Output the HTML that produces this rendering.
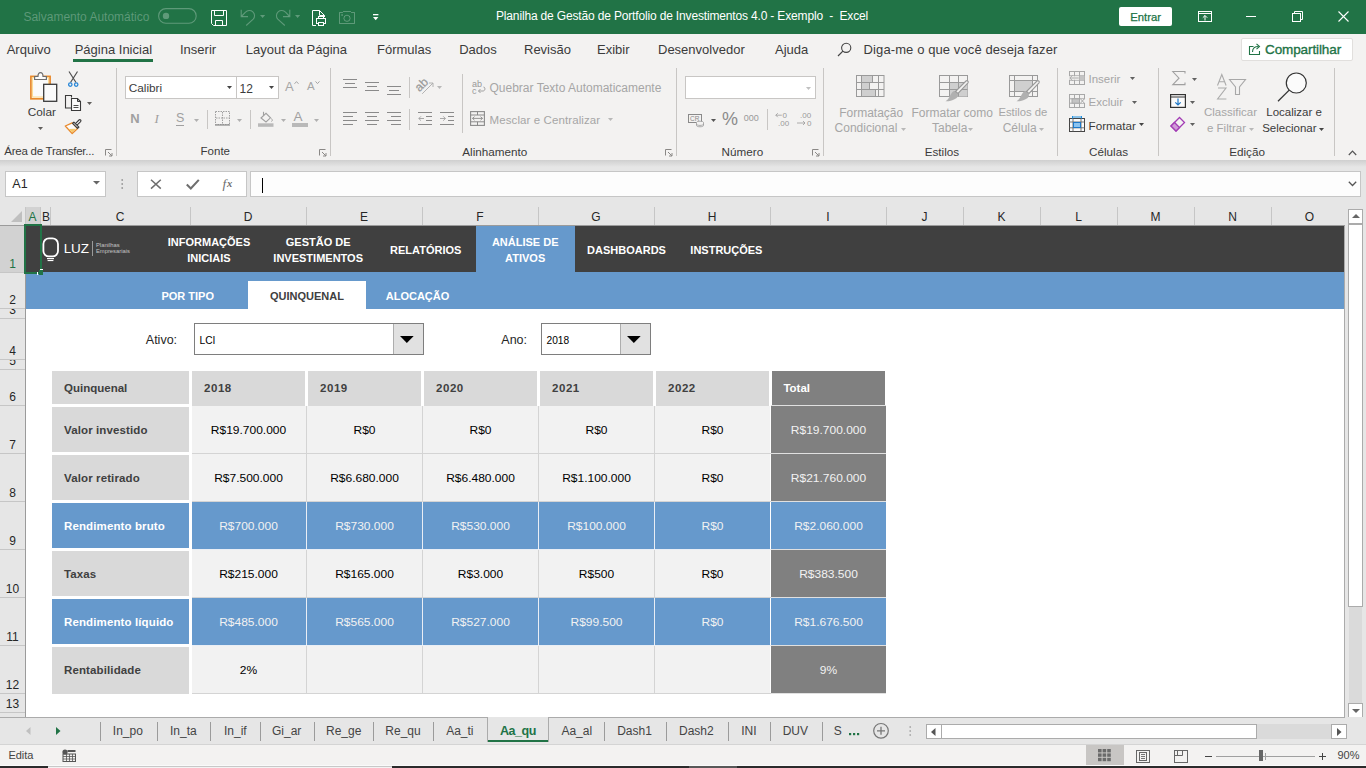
<!DOCTYPE html>
<html><head><meta charset="utf-8">
<style>
*{margin:0;padding:0;box-sizing:border-box}
html,body{width:1366px;height:768px;overflow:hidden;background:#f3f2f1;font-family:"Liberation Sans",sans-serif;color:#262626;position:relative}
.a{position:absolute}
.t{position:absolute;white-space:pre;line-height:1}
svg{overflow:visible}
</style></head><body>

<div class="a" style="left:0px;top:0px;width:1366px;height:34px;background:#217346;"></div>
<div class="t" style="left:23.4px;top:10.64px;font-size:12px;color:rgba(255,255,255,0.28);font-weight:normal;">Salvamento Automático</div>
<svg class="a" style="left:158px;top:8px;" width="39" height="16" viewBox="0 0 39 16"><rect x="0.6" y="0.6" width="37.6" height="14.6" rx="7.3" fill="none" stroke="rgba(255,255,255,0.28)" stroke-width="1.1"/><circle cx="8" cy="7.9" r="3.2" fill="rgba(255,255,255,0.28)"/></svg>
<svg class="a" style="left:211px;top:10px;" width="16" height="16" viewBox="0 0 16 16"><path d="M0.5 0.5 H15.5 V15.5 H2.5 L0.5 13.5 Z" fill="none" stroke="#fff" stroke-width="1"/><path d="M3.5 0.5 V5.5 H12.5 V0.5" fill="none" stroke="#fff"/><path d="M4.5 15.5 V10.5 H11.5 V15.5" fill="none" stroke="#fff"/></svg>
<svg class="a" style="left:236px;top:6px;" width="24" height="22" viewBox="0 0 24 22"><path d="M5.2 3.8 V10.6 H12" fill="none" stroke="rgba(255,255,255,0.28)" stroke-width="1.1"/><path d="M5.8 10 L9.5 6.2 A5.2 5.2 0 0 1 17.2 13.2 L10.2 19.5" fill="none" stroke="rgba(255,255,255,0.28)" stroke-width="1.1"/></svg>
<svg class="a" style="left:260px;top:15px;" width="5" height="3" viewBox="0 0 5 3"><path d="M0 0 H5.2 L2.6 3 Z" fill="rgba(255,255,255,0.28)"/></svg>
<svg class="a" style="left:271px;top:6px;" width="24" height="22" viewBox="0 0 24 22"><g transform="translate(24,0) scale(-1,1)"><path d="M5.2 3.8 V10.6 H12" fill="none" stroke="rgba(255,255,255,0.28)" stroke-width="1.1"/><path d="M5.8 10 L9.5 6.2 A5.2 5.2 0 0 1 17.2 13.2 L10.2 19.5" fill="none" stroke="rgba(255,255,255,0.28)" stroke-width="1.1"/></g></svg>
<svg class="a" style="left:295px;top:15px;" width="5" height="3" viewBox="0 0 5 3"><path d="M0 0 H5.2 L2.6 3 Z" fill="rgba(255,255,255,0.28)"/></svg>
<svg class="a" style="left:312px;top:10px;" width="15" height="16" viewBox="0 0 15 16"><path d="M0.5 0.5 H7.5 L12.5 5.5 V7" fill="none" stroke="#fff"/><path d="M0.5 0.5 V15.5 H4" fill="none" stroke="#fff"/><path d="M7.5 0.5 V5.5 H12.5" fill="none" stroke="#fff"/><rect x="4.5" y="8.5" width="9" height="5" fill="none" stroke="#fff"/><rect x="6.5" y="6.5" width="5" height="2" fill="none" stroke="#fff"/><rect x="6.5" y="12.5" width="5" height="3" fill="#217346" stroke="#fff"/></svg>
<svg class="a" style="left:339px;top:11px;" width="16" height="14" viewBox="0 0 16 14"><path d="M0.5 12.5 V1.5 H3.5 L4.5 0.5 H11.5 L12.5 1.5 H15.5 V12.5 Z" fill="none" stroke="rgba(255,255,255,0.28)"/><circle cx="8" cy="7.3" r="3.1" fill="none" stroke="rgba(255,255,255,0.28)"/><rect x="2.3" y="3.2" width="1.6" height="1.6" fill="rgba(255,255,255,0.28)"/></svg>
<svg class="a" style="left:372.8px;top:13.8px;" width="6" height="7" viewBox="0 0 6 7"><rect x="0" y="0" width="5.4" height="1.3" fill="#fff"/><path d="M0 3 H5.4 L2.7 6.2 Z" fill="#fff"/></svg>
<div class="t" style="left:496px;top:10.04px;font-size:12px;color:#fff;font-weight:normal;letter-spacing:-0.16px">Planilha de Gestão de Portfolio de Investimentos 4.0 - Exemplo  -  Excel</div>
<div class="a" style="left:1119px;top:7px;width:53px;height:19px;background:#fff;border-radius:2px"></div>
<div class="t" style="left:945.7px;width:400px;text-align:center;top:12.030000000000001px;font-size:11.3px;color:#217346;font-weight:normal;-webkit-text-stroke:0.25px #217346">Entrar</div>
<svg class="a" style="left:1198px;top:11px;" width="14" height="11" viewBox="0 0 14 11"><rect x="0.5" y="0.5" width="13" height="10" fill="none" stroke="#fff"/><path d="M0.5 2.5 H13.5" stroke="#fff"/><path d="M7 9.5 V4.5 M4.8 6.7 L7 4.5 L9.2 6.7" fill="none" stroke="#fff"/></svg>
<div class="a" style="left:1246px;top:16px;width:10px;height:1px;background:#fff;"></div>
<svg class="a" style="left:1292px;top:11px;" width="11" height="11" viewBox="0 0 11 11"><rect x="0.5" y="2.5" width="8" height="8" fill="none" stroke="#fff"/><path d="M2.5 2.5 V0.5 H10.5 V8.5 H8.5" fill="none" stroke="#fff"/></svg>
<svg class="a" style="left:1338px;top:11px;" width="11" height="11" viewBox="0 0 11 11"><path d="M0.5 0.5 L10.5 10.5 M10.5 0.5 L0.5 10.5" stroke="#fff" stroke-width="1.1"/></svg>
<div class="a" style="left:0px;top:34px;width:1366px;height:126px;background:#f3f2f1;"></div>
<div class="t" style="left:6.7px;top:43.0px;font-size:13px;color:#3b3b3b;font-weight:normal;">Arquivo</div>
<div class="t" style="left:74.7px;top:43.0px;font-size:13px;color:#3b3b3b;font-weight:normal;">Página Inicial</div>
<div class="t" style="left:180px;top:43.0px;font-size:13px;color:#3b3b3b;font-weight:normal;">Inserir</div>
<div class="t" style="left:245.8px;top:43.0px;font-size:13px;color:#3b3b3b;font-weight:normal;">Layout da Página</div>
<div class="t" style="left:377px;top:43.0px;font-size:13px;color:#3b3b3b;font-weight:normal;">Fórmulas</div>
<div class="t" style="left:459.2px;top:43.0px;font-size:13px;color:#3b3b3b;font-weight:normal;">Dados</div>
<div class="t" style="left:524px;top:43.0px;font-size:13px;color:#3b3b3b;font-weight:normal;">Revisão</div>
<div class="t" style="left:597px;top:43.0px;font-size:13px;color:#3b3b3b;font-weight:normal;">Exibir</div>
<div class="t" style="left:658px;top:43.0px;font-size:13px;color:#3b3b3b;font-weight:normal;">Desenvolvedor</div>
<div class="t" style="left:775px;top:43.0px;font-size:13px;color:#3b3b3b;font-weight:normal;">Ajuda</div>
<div class="a" style="left:73px;top:59px;width:79.5px;height:3px;background:#217346;"></div>
<svg class="a" style="left:837px;top:42px;" width="15" height="15" viewBox="0 0 15 15"><circle cx="9.2" cy="5.8" r="4.6" fill="none" stroke="#444" stroke-width="1.1"/><path d="M5.9 9.1 L1 14" stroke="#444" stroke-width="1.2"/></svg>
<div class="t" style="left:863.6px;top:43.0px;font-size:13px;color:#3b3b3b;font-weight:normal;letter-spacing:0.1px">Diga-me o que você deseja fazer</div>
<div class="a" style="left:1241px;top:37.5px;width:112px;height:23px;background:#fff;border:1px solid #e1dfdd;border-radius:2px"></div>
<svg class="a" style="left:1248px;top:42px;" width="14" height="14" viewBox="0 0 14 14"><path d="M5.5 4.5 H1.5 V12.5 H11.5 V9" fill="none" stroke="#217346" stroke-width="1.1"/><path d="M4.5 10 C4.5 6 7 4.5 10.5 4.5" fill="none" stroke="#217346" stroke-width="1.1"/><path d="M8.5 1.8 L11.5 4.5 L8.5 7.2" fill="none" stroke="#217346" stroke-width="1.1"/></svg>
<div class="t" style="left:1265px;top:43.07px;font-size:13.5px;color:#217346;font-weight:normal;letter-spacing:-0.1px;-webkit-text-stroke:0.35px #217346">Compartilhar</div>
<svg class="a" style="left:30px;top:72px;" width="28" height="30" viewBox="0 0 28 30"><rect x="0.9" y="4.4" width="19.2" height="22.4" fill="#fbfbfb" stroke="#e8892c" stroke-width="1.7"/><rect x="2.6" y="5.6" width="15.8" height="19.4" fill="none" stroke="#fcd98a" stroke-width="1"/><rect x="3.5" y="6.5" width="14" height="17.5" fill="#fbfbfb"/><path d="M4.6 7.5 V4.5 H8 C8 1.5 9.2 0.6 10.5 0.6 C11.8 0.6 13 1.5 13 4.5 H16.4 V7.5 Z" fill="#fbfbfb" stroke="#6f6f6f" stroke-width="1.2"/><rect x="13.7" y="12.3" width="13" height="17" fill="#fbfbfb" stroke="#3a3a3a" stroke-width="1.3"/></svg>
<div class="t" style="left:27.7px;top:107.01px;font-size:11.8px;color:#3b3b3b;font-weight:normal;">Colar</div>
<svg class="a" style="left:38px;top:127px;" width="5" height="3" viewBox="0 0 5 3"><path d="M0 0 H5 L2.5 3 Z" fill="#605e5c"/></svg>
<svg class="a" style="left:67.5px;top:71px;" width="11" height="16" viewBox="0 0 11 16"><path d="M1 0.5 L8 11.5 M9.5 0.5 L2.5 11.5" stroke="#505050" stroke-width="1.2"/><circle cx="2.3" cy="13.6" r="1.7" fill="none" stroke="#2b88d8" stroke-width="1.3"/><circle cx="8.2" cy="13.6" r="1.7" fill="none" stroke="#2b88d8" stroke-width="1.3"/></svg>
<svg class="a" style="left:65px;top:95.2px;" width="17" height="17" viewBox="0 0 17 17"><path d="M6.5 2.5 V0.5 H0.5 V13 H6" fill="none" stroke="#3a3a3a" stroke-width="1.1"/><path d="M6.5 3.5 H12.5 L15.5 6.5 V15.5 H6.5 Z" fill="#fbfbfb" stroke="#3a3a3a" stroke-width="1.1"/><path d="M12.5 3.5 V6.5 H15.5" fill="none" stroke="#3a3a3a" stroke-width="1"/><path d="M8.5 10.5 H13.5 M8.5 12.5 H13.5" stroke="#3a3a3a" stroke-width="0.9"/></svg>
<svg class="a" style="left:87px;top:102px;" width="5" height="3" viewBox="0 0 5 3"><path d="M0 0 H5 L2.5 3 Z" fill="#605e5c"/></svg>
<svg class="a" style="left:62px;top:115px;" width="22" height="22" viewBox="0 0 22 22"><path d="M3.3 11 L10.2 7.8 L15.6 13.6 L10.2 18.6 Z" fill="#fbfbfb" stroke="#e8892c" stroke-width="1.3" stroke-linejoin="round"/><path d="M6.5 14 L14 13.8 L10.2 17.6 Z" fill="#f7c766"/><path d="M14.2 9.4 L17.8 5.8" stroke="#3a3a3a" stroke-width="3.4" stroke-linecap="round"/><path d="M14.2 9.4 L17.8 5.8" stroke="#fbfbfb" stroke-width="1.2" stroke-linecap="round"/><path d="M10.6 8.4 L11.9 7.1 L16.9 12.1 L15.6 13.4 Z" fill="#fbfbfb" stroke="#3a3a3a" stroke-width="1.2" stroke-linejoin="round"/></svg>
<div class="t" style="left:4.3px;top:146.07000000000002px;font-size:11.5px;color:#3b3b3b;font-weight:normal;letter-spacing:-0.25px">Área de Transfer...</div>
<svg class="a" style="left:105px;top:149px;" width="8" height="8" viewBox="0 0 8 8"><path d="M0.5 0.5 H6.5 M0.5 0.5 V6.5" fill="none" stroke="#8a8886" stroke-width="1"/><path d="M3 3 L7 7 M7 4 V7 H4" fill="none" stroke="#8a8886" stroke-width="1"/></svg>
<div class="a" style="left:116px;top:68px;width:1px;height:88px;background:#c8c6c4;"></div>
<div class="a" style="left:125px;top:76px;width:112px;height:23px;background:#fff;border:1px solid #c8c6c4"></div>
<div class="a" style="left:236px;top:76px;width:43px;height:23px;background:#fff;border:1px solid #c8c6c4"></div>
<div class="t" style="left:128.7px;top:83.01px;font-size:11.8px;color:#3b3b3b;font-weight:normal;">Calibri</div>
<div class="t" style="left:239.5px;top:82.84px;font-size:12px;color:#3b3b3b;font-weight:normal;">12</div>
<svg class="a" style="left:226.5px;top:86.2px;" width="5" height="3" viewBox="0 0 5 3"><path d="M0 0 H5 L2.5 3 Z" fill="#444"/></svg>
<svg class="a" style="left:268.7px;top:86.2px;" width="5" height="3" viewBox="0 0 5 3"><path d="M0 0 H5 L2.5 3 Z" fill="#444"/></svg>
<div class="t" style="left:285px;top:80.2px;font-size:13px;color:#a6a6a6;font-weight:normal;">A</div>
<svg class="a" style="left:293.5px;top:80.5px;" width="5" height="3" viewBox="0 0 5 3"><path d="M0.5 2.8 L2.5 0.6 L4.5 2.8" fill="none" stroke="#a6a6a6" stroke-width="1"/></svg>
<div class="t" style="left:307px;top:81.47px;font-size:11.5px;color:#a6a6a6;font-weight:normal;">A</div>
<svg class="a" style="left:315px;top:80.5px;" width="5" height="3" viewBox="0 0 5 3"><path d="M0.5 0.4 L2.5 2.6 L4.5 0.4" fill="none" stroke="#a6a6a6" stroke-width="1"/></svg>
<div class="t" style="left:130.3px;top:112.2px;font-size:13px;color:#a0a0a0;font-weight:bold;">N</div>
<div class="t" style="left:154.5px;top:112.2px;font-size:13px;color:#a0a0a0;font-weight:normal;font-family:'Liberation Serif';font-style:italic">I</div>
<div class="t" style="left:176px;top:112.42px;font-size:12.5px;color:#a0a0a0;font-weight:normal;">S</div>
<div class="a" style="left:176px;top:124.5px;width:8px;height:1px;background:#a0a0a0;"></div>
<svg class="a" style="left:194.2px;top:118.5px;" width="5" height="3" viewBox="0 0 5 3"><path d="M0 0 H5 L2.5 3 Z" fill="#b0b0b0"/></svg>
<div class="a" style="left:207px;top:110px;width:1px;height:19px;background:#c8c6c4;"></div>
<svg class="a" style="left:215px;top:111px;" width="15" height="15" viewBox="0 0 15 15"><rect x="0.5" y="0.5" width="14" height="13" fill="none" stroke="#a0a0a0" stroke-width="1" stroke-dasharray="1.5 1"/><path d="M7.5 1 V13.5 M1 7 H14.5" stroke="#a0a0a0" stroke-width="1" stroke-dasharray="1.5 1"/><path d="M0 14 H15" stroke="#8a8a8a" stroke-width="1.2"/></svg>
<svg class="a" style="left:237.2px;top:118.5px;" width="5" height="3" viewBox="0 0 5 3"><path d="M0 0 H5 L2.5 3 Z" fill="#b0b0b0"/></svg>
<div class="a" style="left:250px;top:110px;width:1px;height:19px;background:#c8c6c4;"></div>
<svg class="a" style="left:258px;top:111px;" width="16" height="16" viewBox="0 0 16 16"><path d="M3 7 L8 2.3 L12.5 6.8 L8 11 Z" fill="none" stroke="#a0a0a0" stroke-width="1.1"/><path d="M5.5 4.5 V0.8" stroke="#a0a0a0" stroke-width="1.1"/><path d="M13.5 7.5 C14.5 9 14.5 10 13.5 10.5" stroke="#a0a0a0" fill="none"/><rect x="0" y="12.3" width="15.5" height="3.5" fill="#b9b9b9"/></svg>
<svg class="a" style="left:280.6px;top:118.5px;" width="5" height="3" viewBox="0 0 5 3"><path d="M0 0 H5 L2.5 3 Z" fill="#b0b0b0"/></svg>
<div class="t" style="left:293.5px;top:110.07px;font-size:13.5px;color:#a0a0a0;font-weight:normal;">A</div>
<div class="a" style="left:292.2px;top:123.4px;width:15.6px;height:3.4px;background:#b9b9b9;"></div>
<svg class="a" style="left:314.2px;top:118.5px;" width="5" height="3" viewBox="0 0 5 3"><path d="M0 0 H5 L2.5 3 Z" fill="#b0b0b0"/></svg>
<div class="t" style="left:200.6px;top:146.07000000000002px;font-size:11.5px;color:#3b3b3b;font-weight:normal;">Fonte</div>
<svg class="a" style="left:318.5px;top:149px;" width="8" height="8" viewBox="0 0 8 8"><path d="M0.5 0.5 H6.5 M0.5 0.5 V6.5" fill="none" stroke="#8a8886" stroke-width="1"/><path d="M3 3 L7 7 M7 4 V7 H4" fill="none" stroke="#8a8886" stroke-width="1"/></svg>
<div class="a" style="left:330px;top:68px;width:1px;height:88px;background:#c8c6c4;"></div>
<svg class="a" style="left:343px;top:79px;" width="20" height="20" viewBox="0 0 20 20"><rect x="0" y="0" width="14" height="1" fill="#8a8a8a"/><rect x="2" y="4" width="10" height="1" fill="#8a8a8a"/><rect x="0" y="8" width="14" height="1" fill="#8a8a8a"/></svg>
<svg class="a" style="left:365px;top:82px;" width="20" height="20" viewBox="0 0 20 20"><rect x="0" y="0" width="14" height="1" fill="#8a8a8a"/><rect x="2" y="4" width="10" height="1" fill="#8a8a8a"/><rect x="0" y="8" width="14" height="1" fill="#8a8a8a"/></svg>
<svg class="a" style="left:387px;top:86px;" width="20" height="20" viewBox="0 0 20 20"><rect x="0" y="0" width="14" height="1" fill="#8a8a8a"/><rect x="2" y="4" width="10" height="1" fill="#8a8a8a"/><rect x="0" y="8" width="14" height="1" fill="#8a8a8a"/></svg>
<div class="a" style="left:409px;top:77px;width:1px;height:21px;background:#c8c6c4;"></div>
<svg class="a" style="left:417px;top:79px;" width="16" height="16" viewBox="0 0 16 16"><text x="0" y="0" transform="translate(2.6,13.2) rotate(-45)" font-family="Liberation Sans" font-size="12" fill="#9a9a9a" stroke="#9a9a9a" stroke-width="0.25">ab</text><path d="M5.2 14.8 L16 4 M12 4 H16 V8" fill="none" stroke="#ababab" stroke-width="0.9"/></svg>
<svg class="a" style="left:437px;top:86px;" width="5" height="3" viewBox="0 0 5 3"><path d="M0 0 H5 L2.5 3 Z" fill="#b8b8b8"/></svg>
<div class="a" style="left:462px;top:74px;width:1px;height:59px;background:#c8c6c4;"></div>
<svg class="a" style="left:472.3px;top:80px;" width="15" height="15" viewBox="0 0 15 15"><text x="0" y="7" font-family="Liberation Sans" font-size="9" fill="#999">ab</text><text x="0" y="13.6" font-family="Liberation Sans" font-size="9" fill="#999">c</text><path d="M6.5 11 H11 C13.5 11 13.5 7 11.5 7" fill="none" stroke="#999" stroke-width="0.9"/><path d="M8.5 9 L6.5 11 L8.5 13" fill="none" stroke="#999" stroke-width="0.9"/></svg>
<div class="t" style="left:489.5px;top:82.44px;font-size:12px;color:#a6a6a6;font-weight:normal;">Quebrar Texto Automaticamente</div>
<svg class="a" style="left:343px;top:112px;" width="20" height="20" viewBox="0 0 20 20"><rect x="0" y="0" width="14" height="1" fill="#8a8a8a"/><rect x="0" y="4" width="10" height="1" fill="#8a8a8a"/><rect x="0" y="8" width="14" height="1" fill="#8a8a8a"/><rect x="0" y="12" width="10" height="1" fill="#8a8a8a"/></svg>
<svg class="a" style="left:365px;top:112px;" width="20" height="20" viewBox="0 0 20 20"><rect x="0" y="0" width="14" height="1" fill="#8a8a8a"/><rect x="2" y="4" width="10" height="1" fill="#8a8a8a"/><rect x="0" y="8" width="14" height="1" fill="#8a8a8a"/><rect x="2" y="12" width="10" height="1" fill="#8a8a8a"/></svg>
<svg class="a" style="left:387px;top:112px;" width="20" height="20" viewBox="0 0 20 20"><rect x="0" y="0" width="14" height="1" fill="#8a8a8a"/><rect x="4" y="4" width="10" height="1" fill="#8a8a8a"/><rect x="0" y="8" width="14" height="1" fill="#8a8a8a"/><rect x="4" y="12" width="10" height="1" fill="#8a8a8a"/></svg>
<div class="a" style="left:409px;top:109px;width:1px;height:21px;background:#c8c6c4;"></div>
<svg class="a" style="left:418px;top:112px;" width="15" height="14" viewBox="0 0 15 14"><rect x="0" y="0" width="14" height="1" fill="#8a8a8a"/><rect x="8" y="4" width="6" height="1" fill="#8a8a8a"/><rect x="8" y="8" width="6" height="1" fill="#8a8a8a"/><rect x="0" y="12" width="14" height="1" fill="#8a8a8a"/><path d="M6 6.5 H0.8 M3 4.3 L0.8 6.5 L3 8.7" fill="none" stroke="#a0a0a0" stroke-width="0.9"/></svg>
<svg class="a" style="left:440px;top:112px;" width="15" height="14" viewBox="0 0 15 14"><rect x="0" y="0" width="14" height="1" fill="#8a8a8a"/><rect x="8" y="4" width="6" height="1" fill="#8a8a8a"/><rect x="8" y="8" width="6" height="1" fill="#8a8a8a"/><rect x="0" y="12" width="14" height="1" fill="#8a8a8a"/><path d="M0 6.5 H5.4 M3.2 4.3 L5.4 6.5 L3.2 8.7" fill="none" stroke="#a0a0a0" stroke-width="0.9"/></svg>
<svg class="a" style="left:470px;top:111px;" width="15" height="15" viewBox="0 0 15 15"><rect x="0.6" y="0.6" width="13.8" height="13.8" fill="none" stroke="#8a8a8a" stroke-width="1.1"/><path d="M0.6 4 H14.4 M0.6 10.8 H14.4 M7.5 0.6 V4 M7.5 10.8 V14.4" stroke="#8a8a8a" stroke-width="1"/><path d="M2.5 7.4 H12.5 M4.5 5.6 L2.5 7.4 L4.5 9.2 M10.5 5.6 L12.5 7.4 L10.5 9.2" fill="none" stroke="#8a8a8a" stroke-width="0.9"/></svg>
<div class="t" style="left:489.5px;top:115.27px;font-size:11.5px;color:#a6a6a6;font-weight:normal;letter-spacing:0.1px">Mesclar e Centralizar</div>
<svg class="a" style="left:608px;top:118.2px;" width="5" height="3" viewBox="0 0 5 3"><path d="M0 0 H5 L2.5 3 Z" fill="#b8b8b8"/></svg>
<div class="t" style="left:462.3px;top:145.9px;font-size:11.7px;color:#3b3b3b;font-weight:normal;">Alinhamento</div>
<svg class="a" style="left:664.5px;top:149px;" width="8" height="8" viewBox="0 0 8 8"><path d="M0.5 0.5 H6.5 M0.5 0.5 V6.5" fill="none" stroke="#8a8886" stroke-width="1"/><path d="M3 3 L7 7 M7 4 V7 H4" fill="none" stroke="#8a8886" stroke-width="1"/></svg>
<div class="a" style="left:676px;top:68px;width:1px;height:88px;background:#c8c6c4;"></div>
<div class="a" style="left:685px;top:76px;width:131px;height:23px;background:#fff;border:1px solid #c8c6c4"></div>
<svg class="a" style="left:805.5px;top:86.5px;" width="5" height="3" viewBox="0 0 5 3"><path d="M0 0 H5 L2.5 3 Z" fill="#c0c0c0"/></svg>
<svg class="a" style="left:688px;top:114px;" width="17" height="14" viewBox="0 0 17 14"><rect x="0.5" y="0.5" width="13" height="8" fill="none" stroke="#8a8a8a"/><text x="2" y="7" font-family="Liberation Sans" font-size="6.5" fill="#8a8a8a">CR</text><ellipse cx="12" cy="8.5" rx="3.5" ry="1.3" fill="#f3f2f1" stroke="#999" stroke-width="0.8"/><path d="M8.5 8.5 V11.5 C8.5 13.2 15.5 13.2 15.5 11.5 V8.5" fill="#f3f2f1" stroke="#999" stroke-width="0.8"/><path d="M8.5 10.2 C8.5 11.8 15.5 11.8 15.5 10.2" fill="none" stroke="#999" stroke-width="0.8"/></svg>
<svg class="a" style="left:710.5px;top:118.5px;" width="5" height="3" viewBox="0 0 5 3"><path d="M0 0 H5 L2.5 3 Z" fill="#555"/></svg>
<div class="t" style="left:722px;top:110.26px;font-size:18px;color:#8a8a8a;font-weight:normal;">%</div>
<div class="t" style="left:743.8px;top:114.38px;font-size:9px;color:#9a9a9a;font-weight:normal;">000</div>
<div class="a" style="left:767px;top:109px;width:1px;height:21px;background:#c8c6c4;"></div>
<svg class="a" style="left:775px;top:111px;" width="16" height="16" viewBox="0 0 16 16"><text x="7.5" y="7" font-family="Liberation Sans" font-size="8" fill="#9a9a9a">0</text><text x="3" y="15" font-family="Liberation Sans" font-size="8" fill="#9a9a9a">.00</text><path d="M6.8 4.2 H0.8 M2.8 2.2 L0.8 4.2 L2.8 6.2" fill="none" stroke="#9a9a9a" stroke-width="0.8"/></svg>
<svg class="a" style="left:797px;top:111px;" width="16" height="16" viewBox="0 0 16 16"><text x="3" y="7" font-family="Liberation Sans" font-size="8" fill="#9a9a9a">.00</text><text x="10" y="15" font-family="Liberation Sans" font-size="8" fill="#9a9a9a">0</text><path d="M0 12 H8 M6 10 L8 12 L6 14" fill="none" stroke="#9a9a9a" stroke-width="0.8"/></svg>
<div class="t" style="left:721.6px;top:145.9px;font-size:11.7px;color:#3b3b3b;font-weight:normal;">Número</div>
<svg class="a" style="left:811.5px;top:149px;" width="8" height="8" viewBox="0 0 8 8"><path d="M0.5 0.5 H6.5 M0.5 0.5 V6.5" fill="none" stroke="#8a8886" stroke-width="1"/><path d="M3 3 L7 7 M7 4 V7 H4" fill="none" stroke="#8a8886" stroke-width="1"/></svg>
<div class="a" style="left:823px;top:68px;width:1px;height:88px;background:#c8c6c4;"></div>
<svg class="a" style="left:856px;top:75px;" width="29" height="23" viewBox="0 0 29 23"><rect x="0.5" y="0.5" width="27.5" height="21" fill="#f3f2f1" stroke="#9a9a9a"/><rect x="5.5" y="1" width="11" height="6.5" fill="#cfcfcf"/><rect x="5.5" y="7.5" width="8" height="7" fill="#cfcfcf"/><rect x="5.5" y="14.5" width="14" height="6.5" fill="#cfcfcf"/><path d="M0.5 7.5 H28 M0.5 14.5 H28 M5.5 0.5 V21.5 M22.5 0.5 V21.5" stroke="#9a9a9a" stroke-width="1"/><path d="M16.5 0.5 V7.5 M13.5 7.5 V14.5 M19.5 14.5 V21.5" stroke="#9a9a9a"/></svg>
<svg class="a" style="left:938.5px;top:75px;" width="30" height="23" viewBox="0 0 30 23"><rect x="0.5" y="0.5" width="28" height="21" fill="#f3f2f1" stroke="#9a9a9a"/><rect x="10.5" y="7.5" width="18" height="14" fill="#cfcfcf"/><path d="M0.5 7.5 H28.5 M0.5 14.5 H28.5 M10.5 0.5 V21.5 M19.5 0.5 V21.5" stroke="#9a9a9a"/></svg>
<svg class="a" style="left:944px;top:80px;" width="26" height="22" viewBox="0 0 26 22"><path d="M11 11 C15 13 15 17 11 19 C8 21 4 21.5 1.5 21.3 C4 20 5.5 17 7 14 C8 12 9.5 10.5 11 11 Z" fill="#b0b0b0"/><path d="M11.5 11.5 L22 1 C23 0 25 1.5 24 2.8 L14 13.5 Z" fill="#f3f2f1" stroke="#9a9a9a" stroke-width="1.1"/></svg>
<svg class="a" style="left:1009px;top:75px;" width="30" height="23" viewBox="0 0 30 23"><rect x="0.5" y="0.5" width="28" height="21" fill="#f3f2f1" stroke="#9a9a9a"/><rect x="5.5" y="5.5" width="18" height="11" fill="#cfcfcf" stroke="#9a9a9a"/><path d="M0.5 5.5 H28.5 M0.5 16.5 H28.5 M5.5 0.5 V21.5 M23.5 0.5 V21.5" stroke="#9a9a9a"/></svg>
<svg class="a" style="left:1014.5px;top:80px;" width="26" height="22" viewBox="0 0 26 22"><path d="M11 11 C15 13 15 17 11 19 C8 21 4 21.5 1.5 21.3 C4 20 5.5 17 7 14 C8 12 9.5 10.5 11 11 Z" fill="#b0b0b0"/><path d="M11.5 11.5 L22 1 C23 0 25 1.5 24 2.8 L14 13.5 Z" fill="#f3f2f1" stroke="#9a9a9a" stroke-width="1.1"/></svg>
<div class="t" style="left:839.2px;top:106.74000000000001px;font-size:12px;color:#a6a6a6;font-weight:normal;">Formatação</div>
<div class="t" style="left:834.6px;top:122.34px;font-size:12px;color:#a6a6a6;font-weight:normal;">Condicional</div>
<svg class="a" style="left:900.8px;top:127.5px;" width="5" height="3" viewBox="0 0 5 3"><path d="M0 0 H5 L2.5 3 Z" fill="#b8b8b8"/></svg>
<div class="t" style="left:911.5px;top:106.74000000000001px;font-size:12px;color:#a6a6a6;font-weight:normal;">Formatar como</div>
<div class="t" style="left:932px;top:122.34px;font-size:12px;color:#a6a6a6;font-weight:normal;">Tabela</div>
<svg class="a" style="left:968px;top:127.5px;" width="5" height="3" viewBox="0 0 5 3"><path d="M0 0 H5 L2.5 3 Z" fill="#b8b8b8"/></svg>
<div class="t" style="left:998.4px;top:107.33000000000001px;font-size:11.3px;color:#a6a6a6;font-weight:normal;">Estilos de</div>
<div class="t" style="left:1002.7px;top:122.34px;font-size:12px;color:#a6a6a6;font-weight:normal;">Célula</div>
<svg class="a" style="left:1038.5px;top:127.5px;" width="5" height="3" viewBox="0 0 5 3"><path d="M0 0 H5 L2.5 3 Z" fill="#b8b8b8"/></svg>
<div class="t" style="left:924.7px;top:145.9px;font-size:11.7px;color:#3b3b3b;font-weight:normal;">Estilos</div>
<div class="a" style="left:1057px;top:68px;width:1px;height:88px;background:#c8c6c4;"></div>
<svg class="a" style="left:1069px;top:71px;" width="17" height="15" viewBox="0 0 17 15"><rect x="0.5" y="0.5" width="15" height="13" fill="none" stroke="#a8a8a8"/><path d="M0.5 4.8 H15.5 M0.5 9.2 H15.5 M5.5 0.5 V13.5 M10.5 0.5 V13.5" stroke="#a8a8a8"/><rect x="10.5" y="4.8" width="5" height="4.4" fill="#c4c4c4"/><rect x="0" y="5.3" width="9.8" height="3.4" fill="#f3f2f1"/><path d="M9.8 7 H0.8 M3.6 4.2 L0.8 7 L3.6 9.8" fill="none" stroke="#a8a8a8" stroke-width="1"/></svg>
<div class="t" style="left:1088.5px;top:74.27px;font-size:11.5px;color:#a6a6a6;font-weight:normal;">Inserir</div>
<svg class="a" style="left:1130px;top:77px;" width="5" height="3" viewBox="0 0 5 3"><path d="M0 0 H5 L2.5 3 Z" fill="#606060"/></svg>
<svg class="a" style="left:1069px;top:94px;" width="17" height="15" viewBox="0 0 17 15"><rect x="0.5" y="0.5" width="15" height="13" fill="none" stroke="#a8a8a8"/><path d="M0.5 4.8 H15.5 M0.5 9.2 H15.5 M5.5 0.5 V13.5 M10.5 0.5 V13.5" stroke="#a8a8a8"/><rect x="3" y="4.8" width="7.5" height="4.4" fill="#c4c4c4" stroke="#a8a8a8"/><rect x="11" y="5.3" width="5" height="3.6" fill="#f3f2f1"/><path d="M11.3 4.6 L15.5 9.4 M15.5 4.6 L11.3 9.4" stroke="#a8a8a8" stroke-width="1"/></svg>
<div class="t" style="left:1088.5px;top:97.27px;font-size:11.5px;color:#a6a6a6;font-weight:normal;">Excluir</div>
<svg class="a" style="left:1132px;top:100.5px;" width="5" height="3" viewBox="0 0 5 3"><path d="M0 0 H5 L2.5 3 Z" fill="#606060"/></svg>
<svg class="a" style="left:1069px;top:117px;" width="17" height="16" viewBox="0 0 17 16"><rect x="0.5" y="1.5" width="15" height="13" fill="#fbfbfb" stroke="#444" stroke-width="1"/><path d="M0.5 5 H15.5 M0.5 10.8 H15.5 M4 1.5 V14.5 M12 1.5 V14.5" stroke="#666" stroke-width="0.9"/><rect x="4.5" y="5.5" width="7" height="5" fill="#8cc4f0" stroke="#1e78c8" stroke-width="1"/><path d="M3.5 0 H12.5 M3.5 -1 V1.5 M12.5 -1 V1.5" stroke="#1e90e0" stroke-width="1"/></svg>
<div class="t" style="left:1088.5px;top:119.6px;font-size:11.7px;color:#3b3b3b;font-weight:normal;">Formatar</div>
<svg class="a" style="left:1139px;top:123px;" width="5" height="3" viewBox="0 0 5 3"><path d="M0 0 H5 L2.5 3 Z" fill="#444"/></svg>
<div class="t" style="left:1089px;top:145.9px;font-size:11.7px;color:#3b3b3b;font-weight:normal;">Células</div>
<div class="a" style="left:1158px;top:68px;width:1px;height:88px;background:#c8c6c4;"></div>
<svg class="a" style="left:1171.5px;top:71px;" width="14" height="15" viewBox="0 0 14 15"><path d="M13 2.5 V0.5 H0.8 L7 7.2 L0.8 13.6 H13 V11.5" fill="none" stroke="#a0a0a0" stroke-width="1.1"/></svg>
<svg class="a" style="left:1191.8px;top:77.5px;" width="5" height="3" viewBox="0 0 5 3"><path d="M0 0 H5 L2.5 3 Z" fill="#606060"/></svg>
<svg class="a" style="left:1170px;top:94px;" width="16" height="14" viewBox="0 0 16 14"><rect x="0.6" y="0.6" width="14.8" height="12.8" fill="#fbfbfb" stroke="#333" stroke-width="1.2"/><path d="M0.6 3 H15.4" stroke="#333" stroke-width="1"/><path d="M8 4.5 V11 M5.3 8.3 L8 11 L10.7 8.3" fill="none" stroke="#1e78c8" stroke-width="1.2"/></svg>
<svg class="a" style="left:1190px;top:100.5px;" width="5" height="3" viewBox="0 0 5 3"><path d="M0 0 H5 L2.5 3 Z" fill="#606060"/></svg>
<svg class="a" style="left:1170px;top:116px;" width="16" height="16" viewBox="0 0 16 16"><path d="M1 10 L9.5 1.5 L14.5 6.5 L6 15 Z" fill="#f3f2f1" stroke="#a23cb4" stroke-width="1.3"/><path d="M1 10 L4.5 6.5 L9.5 11.5 L6 15 Z" fill="#d09ad8" stroke="#a23cb4" stroke-width="1.3"/></svg>
<svg class="a" style="left:1190px;top:123px;" width="5" height="3" viewBox="0 0 5 3"><path d="M0 0 H5 L2.5 3 Z" fill="#606060"/></svg>
<svg class="a" style="left:1216.5px;top:73.5px;" width="29" height="26" viewBox="0 0 29 26"><path d="M0.5 11.5 L4.8 0.5 L9.1 11.5 M2 7.8 H7.6" fill="none" stroke="#ababab" stroke-width="1.1"/><path d="M1 14 H9 L0.6 25 H9.4" fill="none" stroke="#ababab" stroke-width="1.1"/><path d="M12.5 5.5 H28.5 L22.5 13 V20.5 H18.5 V13 Z" fill="none" stroke="#a8a8a8" stroke-width="1.1"/></svg>
<div class="t" style="left:1204px;top:106.86999999999999px;font-size:11.5px;color:#a6a6a6;font-weight:normal;">Classificar</div>
<div class="t" style="left:1207px;top:122.86999999999999px;font-size:11.5px;color:#a6a6a6;font-weight:normal;">e Filtrar</div>
<svg class="a" style="left:1249px;top:127.5px;" width="5" height="3" viewBox="0 0 5 3"><path d="M0 0 H5 L2.5 3 Z" fill="#b8b8b8"/></svg>
<svg class="a" style="left:1277px;top:71.5px;" width="31" height="31" viewBox="0 0 31 31"><circle cx="19.3" cy="11" r="10" fill="#fbfbfb" stroke="#333" stroke-width="1.2"/><path d="M12.2 18.1 L1 29.3" stroke="#333" stroke-width="1.3"/></svg>
<div class="t" style="left:1266.3px;top:106.86999999999999px;font-size:11.5px;color:#3b3b3b;font-weight:normal;">Localizar e</div>
<div class="t" style="left:1262.2px;top:122.86999999999999px;font-size:11.5px;color:#3b3b3b;font-weight:normal;">Selecionar</div>
<svg class="a" style="left:1318.5px;top:127.5px;" width="5" height="3" viewBox="0 0 5 3"><path d="M0 0 H5 L2.5 3 Z" fill="#444"/></svg>
<div class="t" style="left:1229.2px;top:145.9px;font-size:11.7px;color:#3b3b3b;font-weight:normal;">Edição</div>
<div class="a" style="left:1334px;top:68px;width:1px;height:88px;background:#c8c6c4;"></div>
<svg class="a" style="left:1347.5px;top:149.5px;" width="9" height="6" viewBox="0 0 9 6"><path d="M0.8 5 L4.5 1.2 L8.2 5" fill="none" stroke="#555" stroke-width="1.2"/></svg>
<div class="a" style="left:0px;top:160px;width:1366px;height:47px;background:#e6e6e6;"></div>
<div class="a" style="left:0px;top:160px;width:1366px;height:7px;background:linear-gradient(#cfcfcf,#e6e6e6);"></div>
<div class="a" style="left:5px;top:171px;width:101px;height:26px;background:#fff;border:1px solid #c6c6c6"></div>
<div class="t" style="left:12.3px;top:178.42px;font-size:12.5px;color:#262626;font-weight:normal;">A1</div>
<svg class="a" style="left:93px;top:181px;" width="7" height="4" viewBox="0 0 7 4"><path d="M0 0 H7 L3.5 3.5 Z" fill="#666"/></svg>
<svg class="a" style="left:121px;top:179px;" width="3" height="11" viewBox="0 0 3 11"><circle cx="1.2" cy="1" r="0.9" fill="#999"/><circle cx="1.2" cy="5" r="0.9" fill="#999"/><circle cx="1.2" cy="9" r="0.9" fill="#999"/></svg>
<div class="a" style="left:137px;top:171px;width:110px;height:26px;background:#fff;border:1px solid #c6c6c6"></div>
<svg class="a" style="left:150px;top:178.5px;" width="12" height="10" viewBox="0 0 12 10"><path d="M1 0.8 L10.8 9.6 M10.8 0.8 L1 9.6" stroke="#6e6e6e" stroke-width="1.5"/></svg>
<svg class="a" style="left:185.5px;top:178.5px;" width="14" height="11" viewBox="0 0 14 11"><path d="M0.8 5.6 L4.8 9.4 L12.8 0.9" fill="none" stroke="#6e6e6e" stroke-width="2.1"/></svg>
<div class="t" style="left:222.5px;top:176.57px;font-size:13.5px;color:#6e6e6e;font-weight:normal;font-family:'Liberation Serif'"><i>f</i></div>
<div class="t" style="left:227px;top:178.61px;font-size:10.5px;color:#6e6e6e;font-weight:normal;font-family:'Liberation Serif';font-weight:bold"><i>x</i></div>
<div class="a" style="left:250px;top:171px;width:1111px;height:26px;background:#fdfdfd;border:1px solid #c6c6c6"></div>
<div class="a" style="left:262px;top:178px;width:1px;height:15px;background:#000;"></div>
<svg class="a" style="left:1348px;top:180.5px;" width="9" height="6" viewBox="0 0 9 6"><path d="M0.8 0.8 L4.5 4.5 L8.2 0.8" fill="none" stroke="#555" stroke-width="1.3"/></svg>
<div class="a" style="left:0px;top:207px;width:1345px;height:18px;background:#e6e6e6;"></div>
<svg class="a" style="left:11px;top:211px;" width="12" height="12" viewBox="0 0 12 12"><path d="M11 0 L11 11 L0 11 Z" fill="#bfbfbf"/></svg>
<div class="a" style="left:25px;top:207px;width:15px;height:18px;background:#d2d2d2;"></div>
<div class="a" style="left:40px;top:207px;width:1px;height:18px;background:#c6c6c6;"></div>
<div class="t" style="left:-167.5px;width:400px;text-align:center;top:210.84px;font-size:12px;color:#217346;font-weight:normal;">A</div>
<div class="a" style="left:50px;top:207px;width:1px;height:18px;background:#c6c6c6;"></div>
<div class="t" style="left:-154.0px;width:400px;text-align:center;top:210.84px;font-size:12px;color:#262626;font-weight:normal;">B</div>
<div class="a" style="left:190px;top:207px;width:1px;height:18px;background:#c6c6c6;"></div>
<div class="t" style="left:-80.0px;width:400px;text-align:center;top:210.84px;font-size:12px;color:#262626;font-weight:normal;">C</div>
<div class="a" style="left:306px;top:207px;width:1px;height:18px;background:#c6c6c6;"></div>
<div class="t" style="left:48.0px;width:400px;text-align:center;top:210.84px;font-size:12px;color:#262626;font-weight:normal;">D</div>
<div class="a" style="left:422px;top:207px;width:1px;height:18px;background:#c6c6c6;"></div>
<div class="t" style="left:164.0px;width:400px;text-align:center;top:210.84px;font-size:12px;color:#262626;font-weight:normal;">E</div>
<div class="a" style="left:538px;top:207px;width:1px;height:18px;background:#c6c6c6;"></div>
<div class="t" style="left:280.0px;width:400px;text-align:center;top:210.84px;font-size:12px;color:#262626;font-weight:normal;">F</div>
<div class="a" style="left:654px;top:207px;width:1px;height:18px;background:#c6c6c6;"></div>
<div class="t" style="left:396.0px;width:400px;text-align:center;top:210.84px;font-size:12px;color:#262626;font-weight:normal;">G</div>
<div class="a" style="left:770px;top:207px;width:1px;height:18px;background:#c6c6c6;"></div>
<div class="t" style="left:512.0px;width:400px;text-align:center;top:210.84px;font-size:12px;color:#262626;font-weight:normal;">H</div>
<div class="a" style="left:886px;top:207px;width:1px;height:18px;background:#c6c6c6;"></div>
<div class="t" style="left:628.0px;width:400px;text-align:center;top:210.84px;font-size:12px;color:#262626;font-weight:normal;">I</div>
<div class="a" style="left:963px;top:207px;width:1px;height:18px;background:#c6c6c6;"></div>
<div class="t" style="left:724.5px;width:400px;text-align:center;top:210.84px;font-size:12px;color:#262626;font-weight:normal;">J</div>
<div class="a" style="left:1040px;top:207px;width:1px;height:18px;background:#c6c6c6;"></div>
<div class="t" style="left:801.5px;width:400px;text-align:center;top:210.84px;font-size:12px;color:#262626;font-weight:normal;">K</div>
<div class="a" style="left:1117px;top:207px;width:1px;height:18px;background:#c6c6c6;"></div>
<div class="t" style="left:878.5px;width:400px;text-align:center;top:210.84px;font-size:12px;color:#262626;font-weight:normal;">L</div>
<div class="a" style="left:1194px;top:207px;width:1px;height:18px;background:#c6c6c6;"></div>
<div class="t" style="left:955.5px;width:400px;text-align:center;top:210.84px;font-size:12px;color:#262626;font-weight:normal;">M</div>
<div class="a" style="left:1271px;top:207px;width:1px;height:18px;background:#c6c6c6;"></div>
<div class="t" style="left:1032.5px;width:400px;text-align:center;top:210.84px;font-size:12px;color:#262626;font-weight:normal;">N</div>
<div class="a" style="left:1348px;top:207px;width:1px;height:18px;background:#c6c6c6;"></div>
<div class="t" style="left:1109.5px;width:400px;text-align:center;top:210.84px;font-size:12px;color:#262626;font-weight:normal;">O</div>
<div class="a" style="left:25px;top:207px;width:1px;height:18px;background:#c6c6c6;"></div>
<div class="a" style="left:0px;top:225px;width:1345px;height:1px;background:#9b9b9b;"></div>
<div class="a" style="left:0px;top:226px;width:1345px;height:491px;background:#ffffff;"></div>
<div class="a" style="left:0;top:226px;width:25px;height:46px;background:#d2d2d2;overflow:hidden"><div class="t" style="left:0;width:25px;text-align:center;top:31.84px;font-size:12px;color:#217346">1</div></div>
<div class="a" style="left:0px;top:272px;width:25px;height:1px;background:#c6c6c6;"></div>
<div class="a" style="left:0;top:273px;width:25px;height:35px;background:#e6e6e6;overflow:hidden"><div class="t" style="left:0;width:25px;text-align:center;top:20.84px;font-size:12px;color:#262626">2</div></div>
<div class="a" style="left:0px;top:308px;width:25px;height:1px;background:#c6c6c6;"></div>
<div class="a" style="left:0;top:309px;width:25px;height:9px;background:#e6e6e6;overflow:hidden"><div class="t" style="left:0;width:25px;text-align:center;top:-5.16px;font-size:12px;color:#262626">3</div></div>
<div class="a" style="left:0px;top:318px;width:25px;height:1px;background:#c6c6c6;"></div>
<div class="a" style="left:0;top:319px;width:25px;height:40px;background:#e6e6e6;overflow:hidden"><div class="t" style="left:0;width:25px;text-align:center;top:25.84px;font-size:12px;color:#262626">4</div></div>
<div class="a" style="left:0px;top:359px;width:25px;height:1px;background:#c6c6c6;"></div>
<div class="a" style="left:0;top:360px;width:25px;height:9px;background:#e6e6e6;overflow:hidden"><div class="t" style="left:0;width:25px;text-align:center;top:-5.16px;font-size:12px;color:#262626">5</div></div>
<div class="a" style="left:0px;top:369px;width:25px;height:1px;background:#c6c6c6;"></div>
<div class="a" style="left:0;top:370px;width:25px;height:35px;background:#e6e6e6;overflow:hidden"><div class="t" style="left:0;width:25px;text-align:center;top:20.84px;font-size:12px;color:#262626">6</div></div>
<div class="a" style="left:0px;top:405px;width:25px;height:1px;background:#c6c6c6;"></div>
<div class="a" style="left:0;top:406px;width:25px;height:47px;background:#e6e6e6;overflow:hidden"><div class="t" style="left:0;width:25px;text-align:center;top:32.84px;font-size:12px;color:#262626">7</div></div>
<div class="a" style="left:0px;top:453px;width:25px;height:1px;background:#c6c6c6;"></div>
<div class="a" style="left:0;top:454px;width:25px;height:47px;background:#e6e6e6;overflow:hidden"><div class="t" style="left:0;width:25px;text-align:center;top:32.84px;font-size:12px;color:#262626">8</div></div>
<div class="a" style="left:0px;top:501px;width:25px;height:1px;background:#c6c6c6;"></div>
<div class="a" style="left:0;top:502px;width:25px;height:47px;background:#e6e6e6;overflow:hidden"><div class="t" style="left:0;width:25px;text-align:center;top:32.84px;font-size:12px;color:#262626">9</div></div>
<div class="a" style="left:0px;top:549px;width:25px;height:1px;background:#c6c6c6;"></div>
<div class="a" style="left:0;top:550px;width:25px;height:47px;background:#e6e6e6;overflow:hidden"><div class="t" style="left:0;width:25px;text-align:center;top:32.84px;font-size:12px;color:#262626">10</div></div>
<div class="a" style="left:0px;top:597px;width:25px;height:1px;background:#c6c6c6;"></div>
<div class="a" style="left:0;top:598px;width:25px;height:47px;background:#e6e6e6;overflow:hidden"><div class="t" style="left:0;width:25px;text-align:center;top:32.84px;font-size:12px;color:#262626">11</div></div>
<div class="a" style="left:0px;top:645px;width:25px;height:1px;background:#c6c6c6;"></div>
<div class="a" style="left:0;top:646px;width:25px;height:47px;background:#e6e6e6;overflow:hidden"><div class="t" style="left:0;width:25px;text-align:center;top:32.84px;font-size:12px;color:#262626">12</div></div>
<div class="a" style="left:0px;top:693px;width:25px;height:1px;background:#c6c6c6;"></div>
<div class="a" style="left:0;top:694px;width:25px;height:18px;background:#e6e6e6;overflow:hidden"><div class="t" style="left:0;width:25px;text-align:center;top:3.84px;font-size:12px;color:#262626">13</div></div>
<div class="a" style="left:0px;top:712px;width:25px;height:1px;background:#c6c6c6;"></div>
<div class="a" style="left:0;top:713px;width:25px;height:47px;background:#e6e6e6;overflow:hidden"><div class="t" style="left:0;width:25px;text-align:center;top:32.84px;font-size:12px;color:#262626">14</div></div>
<div class="a" style="left:0px;top:760px;width:25px;height:1px;background:#c6c6c6;"></div>
<div class="a" style="left:25px;top:226px;width:1px;height:491px;background:#9b9b9b;"></div>
<div class="a" style="left:26px;top:226px;width:1319px;height:46px;background:#404040;"></div>
<div class="a" style="left:26px;top:272px;width:1319px;height:37px;background:#6699cc;"></div>
<div class="a" style="left:24px;top:224px;width:18px;height:50px;border:2px solid #217346"></div>
<div class="a" style="left:39px;top:270px;width:4px;height:5px;background:#217346;"></div>
<div class="a" style="left:40px;top:269px;width:3px;height:1px;background:#fff;"></div>
<div class="a" style="left:37px;top:272px;width:1px;height:3px;background:#fff;"></div>
<div class="a" style="left:476px;top:226px;width:99px;height:46px;background:#6699cc;"></div>
<div class="t" style="left:9px;width:400px;text-align:center;top:237.19px;font-size:11px;color:#ffffff;font-weight:bold;">INFORMAÇÕES</div>
<div class="t" style="left:9px;width:400px;text-align:center;top:253.19px;font-size:11px;color:#ffffff;font-weight:bold;">INICIAIS</div>
<div class="t" style="left:118.19999999999999px;width:400px;text-align:center;top:237.19px;font-size:11px;color:#ffffff;font-weight:bold;">GESTÃO DE</div>
<div class="t" style="left:118.19999999999999px;width:400px;text-align:center;top:253.19px;font-size:11px;color:#ffffff;font-weight:bold;">INVESTIMENTOS</div>
<div class="t" style="left:225.7px;width:400px;text-align:center;top:244.69px;font-size:11px;color:#ffffff;font-weight:bold;">RELATÓRIOS</div>
<div class="t" style="left:325.20000000000005px;width:400px;text-align:center;top:237.19px;font-size:11px;color:#ffffff;font-weight:bold;">ANÁLISE DE</div>
<div class="t" style="left:325.20000000000005px;width:400px;text-align:center;top:253.19px;font-size:11px;color:#ffffff;font-weight:bold;">ATIVOS</div>
<div class="t" style="left:426.5px;width:400px;text-align:center;top:244.69px;font-size:11px;color:#ffffff;font-weight:bold;">DASHBOARDS</div>
<div class="t" style="left:526.4px;width:400px;text-align:center;top:244.69px;font-size:11px;color:#ffffff;font-weight:bold;">INSTRUÇÕES</div>
<svg class="a" style="left:42px;top:237px;" width="18" height="25" viewBox="0 0 18 25"><rect x="1.4" y="1.4" width="14.6" height="18" rx="5.5" ry="5.5" fill="none" stroke="#fff" stroke-width="1.8"/><rect x="5" y="21" width="7" height="1.2" fill="#fff"/><rect x="5.6" y="23" width="5.8" height="1.1" fill="#fff"/></svg>
<div class="t" style="left:63.8px;top:242.07px;font-size:13.5px;color:#ffffff;font-weight:normal;letter-spacing:-0.2px">LUZ</div>
<div class="a" style="left:92px;top:241px;width:1px;height:15px;background:#9a9a9a;"></div>
<div class="t" style="left:96px;top:242.89000000000001px;font-size:5.8px;color:#c4c4c4;font-weight:normal;">Planilhas</div>
<div class="t" style="left:96px;top:249.09px;font-size:5.8px;color:#c4c4c4;font-weight:normal;">Empresariais</div>
<div class="a" style="left:248px;top:281px;width:118px;height:28px;background:#ffffff;"></div>
<div class="t" style="left:-12.300000000000011px;width:400px;text-align:center;top:290.69px;font-size:11px;color:#ffffff;font-weight:bold;">POR TIPO</div>
<div class="t" style="left:107px;width:400px;text-align:center;top:290.69px;font-size:11px;color:#404040;font-weight:bold;">QUINQUENAL</div>
<div class="t" style="left:217.5px;width:400px;text-align:center;top:290.69px;font-size:11px;color:#ffffff;font-weight:bold;">ALOCAÇÃO</div>
<div class="t" style="left:145.8px;top:334.42px;font-size:12.5px;color:#262626;font-weight:normal;">Ativo:</div>
<div class="a" style="left:194px;top:323px;width:230px;height:32px;background:#fff;border:1px solid #7e7e7e"></div>
<div class="a" style="left:393px;top:324px;width:30px;height:30px;background:#e1e1e1;border-left:1px solid #adadad"></div>
<svg class="a" style="left:400.45px;top:336px;" width="14" height="7" viewBox="0 0 14 7"><path d="M0 0 L13.7 0 L6.85 7 Z" fill="#000"/></svg>
<div class="t" style="left:199.5px;top:336.37px;font-size:10.2px;color:#000;font-weight:normal;">LCI</div>
<div class="t" style="left:501.3px;top:334.42px;font-size:12.5px;color:#262626;font-weight:normal;">Ano:</div>
<div class="a" style="left:541px;top:323px;width:110px;height:32px;background:#fff;border:1px solid #7e7e7e"></div>
<div class="a" style="left:620px;top:324px;width:30px;height:30px;background:#e1e1e1;border-left:1px solid #adadad"></div>
<svg class="a" style="left:627.4499999999999px;top:336px;" width="14" height="7" viewBox="0 0 14 7"><path d="M0 0 L13.7 0 L6.85 7 Z" fill="#000"/></svg>
<div class="t" style="left:546.5px;top:336.37px;font-size:10.2px;color:#000;font-weight:normal;">2018</div>
<div class="a" style="left:52px;top:371px;width:137px;height:33px;background:#d9d9d9;"></div>
<div class="t" style="left:64px;top:383.27px;font-size:11.5px;color:#404040;font-weight:bold;">Quinquenal</div>
<div class="a" style="left:192px;top:371px;width:113px;height:35px;background:#d9d9d9;"></div>
<div class="t" style="left:204px;top:383.27px;font-size:11.5px;color:#404040;font-weight:bold;letter-spacing:0.55px">2018</div>
<div class="a" style="left:308px;top:371px;width:113px;height:35px;background:#d9d9d9;"></div>
<div class="t" style="left:320px;top:383.27px;font-size:11.5px;color:#404040;font-weight:bold;letter-spacing:0.55px">2019</div>
<div class="a" style="left:424px;top:371px;width:113px;height:35px;background:#d9d9d9;"></div>
<div class="t" style="left:436px;top:383.27px;font-size:11.5px;color:#404040;font-weight:bold;letter-spacing:0.55px">2020</div>
<div class="a" style="left:540px;top:371px;width:113px;height:35px;background:#d9d9d9;"></div>
<div class="t" style="left:552px;top:383.27px;font-size:11.5px;color:#404040;font-weight:bold;letter-spacing:0.55px">2021</div>
<div class="a" style="left:656px;top:371px;width:113px;height:35px;background:#d9d9d9;"></div>
<div class="t" style="left:668px;top:383.27px;font-size:11.5px;color:#404040;font-weight:bold;letter-spacing:0.55px">2022</div>
<div class="a" style="left:772px;top:371px;width:113px;height:34px;background:#808080;"></div>
<div class="a" style="left:771px;top:405px;width:115px;height:1px;background:#e0e0e0;"></div>
<div class="t" style="left:783.4px;top:383.27px;font-size:11.5px;color:#ffffff;font-weight:bold;">Total</div>
<div class="a" style="left:52px;top:407px;width:137px;height:45px;background:#d9d9d9;"></div>
<div class="t" style="left:64px;top:424.77px;font-size:11.5px;color:#404040;font-weight:bold;letter-spacing:0.12px">Valor investido</div>
<div class="a" style="left:192px;top:406px;width:578px;height:48px;background:#f2f2f2;"></div>
<div class="t" style="left:48.5px;width:400px;text-align:center;top:424.34px;font-size:12px;color:#000000;font-weight:normal;transform:scaleY(0.91);transform-origin:50% 10.16px">R$19.700.000</div>
<div class="a" style="left:306px;top:406px;width:1px;height:48px;background:#d4d4d4;"></div>
<div class="t" style="left:164.5px;width:400px;text-align:center;top:424.34px;font-size:12px;color:#000000;font-weight:normal;transform:scaleY(0.91);transform-origin:50% 10.16px">R$0</div>
<div class="a" style="left:422px;top:406px;width:1px;height:48px;background:#d4d4d4;"></div>
<div class="t" style="left:280.5px;width:400px;text-align:center;top:424.34px;font-size:12px;color:#000000;font-weight:normal;transform:scaleY(0.91);transform-origin:50% 10.16px">R$0</div>
<div class="a" style="left:538px;top:406px;width:1px;height:48px;background:#d4d4d4;"></div>
<div class="t" style="left:396.5px;width:400px;text-align:center;top:424.34px;font-size:12px;color:#000000;font-weight:normal;transform:scaleY(0.91);transform-origin:50% 10.16px">R$0</div>
<div class="a" style="left:654px;top:406px;width:1px;height:48px;background:#d4d4d4;"></div>
<div class="t" style="left:512.5px;width:400px;text-align:center;top:424.34px;font-size:12px;color:#000000;font-weight:normal;transform:scaleY(0.91);transform-origin:50% 10.16px">R$0</div>
<div class="a" style="left:192px;top:453px;width:579px;height:1px;background:#d4d4d4;"></div>
<div class="a" style="left:771px;top:406px;width:115px;height:48px;background:#808080;"></div>
<div class="t" style="left:628.5px;width:400px;text-align:center;top:424.34px;font-size:12px;color:#f2f2f2;font-weight:normal;transform:scaleY(0.91);transform-origin:50% 10.16px">R$19.700.000</div>
<div class="a" style="left:771px;top:453px;width:115px;height:1px;background:#e0e0e0;"></div>
<div class="a" style="left:52px;top:455px;width:137px;height:45px;background:#d9d9d9;"></div>
<div class="t" style="left:64px;top:472.77px;font-size:11.5px;color:#404040;font-weight:bold;letter-spacing:0.12px">Valor retirado</div>
<div class="a" style="left:192px;top:454px;width:578px;height:48px;background:#f2f2f2;"></div>
<div class="t" style="left:48.5px;width:400px;text-align:center;top:472.34px;font-size:12px;color:#000000;font-weight:normal;transform:scaleY(0.91);transform-origin:50% 10.16px">R$7.500.000</div>
<div class="a" style="left:306px;top:454px;width:1px;height:48px;background:#d4d4d4;"></div>
<div class="t" style="left:164.5px;width:400px;text-align:center;top:472.34px;font-size:12px;color:#000000;font-weight:normal;transform:scaleY(0.91);transform-origin:50% 10.16px">R$6.680.000</div>
<div class="a" style="left:422px;top:454px;width:1px;height:48px;background:#d4d4d4;"></div>
<div class="t" style="left:280.5px;width:400px;text-align:center;top:472.34px;font-size:12px;color:#000000;font-weight:normal;transform:scaleY(0.91);transform-origin:50% 10.16px">R$6.480.000</div>
<div class="a" style="left:538px;top:454px;width:1px;height:48px;background:#d4d4d4;"></div>
<div class="t" style="left:396.5px;width:400px;text-align:center;top:472.34px;font-size:12px;color:#000000;font-weight:normal;transform:scaleY(0.91);transform-origin:50% 10.16px">R$1.100.000</div>
<div class="a" style="left:654px;top:454px;width:1px;height:48px;background:#d4d4d4;"></div>
<div class="t" style="left:512.5px;width:400px;text-align:center;top:472.34px;font-size:12px;color:#000000;font-weight:normal;transform:scaleY(0.91);transform-origin:50% 10.16px">R$0</div>
<div class="a" style="left:192px;top:501px;width:579px;height:1px;background:#d4d4d4;"></div>
<div class="a" style="left:771px;top:454px;width:115px;height:48px;background:#808080;"></div>
<div class="t" style="left:628.5px;width:400px;text-align:center;top:472.34px;font-size:12px;color:#f2f2f2;font-weight:normal;transform:scaleY(0.91);transform-origin:50% 10.16px">R$21.760.000</div>
<div class="a" style="left:771px;top:501px;width:115px;height:1px;background:#e0e0e0;"></div>
<div class="a" style="left:52px;top:503px;width:137px;height:45px;background:#6699cc;"></div>
<div class="t" style="left:64px;top:520.77px;font-size:11.5px;color:#ffffff;font-weight:bold;letter-spacing:0.12px">Rendimento bruto</div>
<div class="a" style="left:192px;top:502px;width:578px;height:48px;background:#6699cc;"></div>
<div class="t" style="left:48.5px;width:400px;text-align:center;top:520.34px;font-size:12px;color:#f2f2f2;font-weight:normal;transform:scaleY(0.91);transform-origin:50% 10.16px">R$700.000</div>
<div class="a" style="left:306px;top:502px;width:1px;height:48px;background:#e9eef5;"></div>
<div class="t" style="left:164.5px;width:400px;text-align:center;top:520.34px;font-size:12px;color:#f2f2f2;font-weight:normal;transform:scaleY(0.91);transform-origin:50% 10.16px">R$730.000</div>
<div class="a" style="left:422px;top:502px;width:1px;height:48px;background:#e9eef5;"></div>
<div class="t" style="left:280.5px;width:400px;text-align:center;top:520.34px;font-size:12px;color:#f2f2f2;font-weight:normal;transform:scaleY(0.91);transform-origin:50% 10.16px">R$530.000</div>
<div class="a" style="left:538px;top:502px;width:1px;height:48px;background:#e9eef5;"></div>
<div class="t" style="left:396.5px;width:400px;text-align:center;top:520.34px;font-size:12px;color:#f2f2f2;font-weight:normal;transform:scaleY(0.91);transform-origin:50% 10.16px">R$100.000</div>
<div class="a" style="left:654px;top:502px;width:1px;height:48px;background:#e9eef5;"></div>
<div class="t" style="left:512.5px;width:400px;text-align:center;top:520.34px;font-size:12px;color:#f2f2f2;font-weight:normal;transform:scaleY(0.91);transform-origin:50% 10.16px">R$0</div>
<div class="a" style="left:192px;top:549px;width:579px;height:1px;background:#e9eef5;"></div>
<div class="a" style="left:771px;top:502px;width:115px;height:48px;background:#6699cc;"></div>
<div class="t" style="left:628.5px;width:400px;text-align:center;top:520.34px;font-size:12px;color:#f2f2f2;font-weight:normal;transform:scaleY(0.91);transform-origin:50% 10.16px">R$2.060.000</div>
<div class="a" style="left:771px;top:549px;width:115px;height:1px;background:#e0e0e0;"></div>
<div class="a" style="left:52px;top:551px;width:137px;height:45px;background:#d9d9d9;"></div>
<div class="t" style="left:64px;top:568.77px;font-size:11.5px;color:#404040;font-weight:bold;letter-spacing:0.12px">Taxas</div>
<div class="a" style="left:192px;top:550px;width:578px;height:48px;background:#f2f2f2;"></div>
<div class="t" style="left:48.5px;width:400px;text-align:center;top:568.34px;font-size:12px;color:#000000;font-weight:normal;transform:scaleY(0.91);transform-origin:50% 10.16px">R$215.000</div>
<div class="a" style="left:306px;top:550px;width:1px;height:48px;background:#d4d4d4;"></div>
<div class="t" style="left:164.5px;width:400px;text-align:center;top:568.34px;font-size:12px;color:#000000;font-weight:normal;transform:scaleY(0.91);transform-origin:50% 10.16px">R$165.000</div>
<div class="a" style="left:422px;top:550px;width:1px;height:48px;background:#d4d4d4;"></div>
<div class="t" style="left:280.5px;width:400px;text-align:center;top:568.34px;font-size:12px;color:#000000;font-weight:normal;transform:scaleY(0.91);transform-origin:50% 10.16px">R$3.000</div>
<div class="a" style="left:538px;top:550px;width:1px;height:48px;background:#d4d4d4;"></div>
<div class="t" style="left:396.5px;width:400px;text-align:center;top:568.34px;font-size:12px;color:#000000;font-weight:normal;transform:scaleY(0.91);transform-origin:50% 10.16px">R$500</div>
<div class="a" style="left:654px;top:550px;width:1px;height:48px;background:#d4d4d4;"></div>
<div class="t" style="left:512.5px;width:400px;text-align:center;top:568.34px;font-size:12px;color:#000000;font-weight:normal;transform:scaleY(0.91);transform-origin:50% 10.16px">R$0</div>
<div class="a" style="left:192px;top:597px;width:579px;height:1px;background:#d4d4d4;"></div>
<div class="a" style="left:771px;top:550px;width:115px;height:48px;background:#808080;"></div>
<div class="t" style="left:628.5px;width:400px;text-align:center;top:568.34px;font-size:12px;color:#f2f2f2;font-weight:normal;transform:scaleY(0.91);transform-origin:50% 10.16px">R$383.500</div>
<div class="a" style="left:771px;top:597px;width:115px;height:1px;background:#e0e0e0;"></div>
<div class="a" style="left:52px;top:599px;width:137px;height:45px;background:#6699cc;"></div>
<div class="t" style="left:64px;top:616.77px;font-size:11.5px;color:#ffffff;font-weight:bold;letter-spacing:0.12px">Rendimento líquido</div>
<div class="a" style="left:192px;top:598px;width:578px;height:48px;background:#6699cc;"></div>
<div class="t" style="left:48.5px;width:400px;text-align:center;top:616.34px;font-size:12px;color:#f2f2f2;font-weight:normal;transform:scaleY(0.91);transform-origin:50% 10.16px">R$485.000</div>
<div class="a" style="left:306px;top:598px;width:1px;height:48px;background:#e9eef5;"></div>
<div class="t" style="left:164.5px;width:400px;text-align:center;top:616.34px;font-size:12px;color:#f2f2f2;font-weight:normal;transform:scaleY(0.91);transform-origin:50% 10.16px">R$565.000</div>
<div class="a" style="left:422px;top:598px;width:1px;height:48px;background:#e9eef5;"></div>
<div class="t" style="left:280.5px;width:400px;text-align:center;top:616.34px;font-size:12px;color:#f2f2f2;font-weight:normal;transform:scaleY(0.91);transform-origin:50% 10.16px">R$527.000</div>
<div class="a" style="left:538px;top:598px;width:1px;height:48px;background:#e9eef5;"></div>
<div class="t" style="left:396.5px;width:400px;text-align:center;top:616.34px;font-size:12px;color:#f2f2f2;font-weight:normal;transform:scaleY(0.91);transform-origin:50% 10.16px">R$99.500</div>
<div class="a" style="left:654px;top:598px;width:1px;height:48px;background:#e9eef5;"></div>
<div class="t" style="left:512.5px;width:400px;text-align:center;top:616.34px;font-size:12px;color:#f2f2f2;font-weight:normal;transform:scaleY(0.91);transform-origin:50% 10.16px">R$0</div>
<div class="a" style="left:192px;top:645px;width:579px;height:1px;background:#e9eef5;"></div>
<div class="a" style="left:771px;top:598px;width:115px;height:48px;background:#6699cc;"></div>
<div class="t" style="left:628.5px;width:400px;text-align:center;top:616.34px;font-size:12px;color:#f2f2f2;font-weight:normal;transform:scaleY(0.91);transform-origin:50% 10.16px">R$1.676.500</div>
<div class="a" style="left:771px;top:645px;width:115px;height:1px;background:#e0e0e0;"></div>
<div class="a" style="left:52px;top:647px;width:137px;height:47px;background:#d9d9d9;"></div>
<div class="t" style="left:64px;top:664.77px;font-size:11.5px;color:#404040;font-weight:bold;letter-spacing:0.12px">Rentabilidade</div>
<div class="a" style="left:192px;top:646px;width:578px;height:48px;background:#f2f2f2;"></div>
<div class="t" style="left:48.5px;width:400px;text-align:center;top:664.34px;font-size:12px;color:#000000;font-weight:normal;transform:scaleY(0.91);transform-origin:50% 10.16px">2%</div>
<div class="a" style="left:306px;top:646px;width:1px;height:48px;background:#d4d4d4;"></div>
<div class="t" style="left:164.5px;width:400px;text-align:center;top:664.34px;font-size:12px;color:#000000;font-weight:normal;transform:scaleY(0.91);transform-origin:50% 10.16px"></div>
<div class="a" style="left:422px;top:646px;width:1px;height:48px;background:#d4d4d4;"></div>
<div class="t" style="left:280.5px;width:400px;text-align:center;top:664.34px;font-size:12px;color:#000000;font-weight:normal;transform:scaleY(0.91);transform-origin:50% 10.16px"></div>
<div class="a" style="left:538px;top:646px;width:1px;height:48px;background:#d4d4d4;"></div>
<div class="t" style="left:396.5px;width:400px;text-align:center;top:664.34px;font-size:12px;color:#000000;font-weight:normal;transform:scaleY(0.91);transform-origin:50% 10.16px"></div>
<div class="a" style="left:654px;top:646px;width:1px;height:48px;background:#d4d4d4;"></div>
<div class="t" style="left:512.5px;width:400px;text-align:center;top:664.34px;font-size:12px;color:#000000;font-weight:normal;transform:scaleY(0.91);transform-origin:50% 10.16px"></div>
<div class="a" style="left:192px;top:693px;width:579px;height:1px;background:#d4d4d4;"></div>
<div class="a" style="left:771px;top:646px;width:115px;height:48px;background:#808080;"></div>
<div class="t" style="left:628.5px;width:400px;text-align:center;top:664.34px;font-size:12px;color:#f2f2f2;font-weight:normal;transform:scaleY(0.91);transform-origin:50% 10.16px">9%</div>
<div class="a" style="left:771px;top:693px;width:115px;height:1px;background:#e0e0e0;"></div>
<div class="a" style="left:1345px;top:207px;width:21px;height:510px;background:#e6e6e6;"></div>
<div class="a" style="left:1344px;top:226px;width:1px;height:491px;background:#ababab;"></div>
<div class="a" style="left:1348px;top:209px;width:15px;height:15px;background:#fff;border:1px solid #ababab"></div>
<svg class="a" style="left:1351.5px;top:214px;" width="8" height="4" viewBox="0 0 8 4"><path d="M0 4 H8 L4 0 Z" fill="#666"/></svg>
<div class="a" style="left:1348px;top:224px;width:15px;height:383px;background:#fff;border:1px solid #ababab"></div>
<div class="a" style="left:1349px;top:607px;width:13px;height:96px;background:#dadada;"></div>
<div class="a" style="left:1348px;top:703px;width:15px;height:15px;background:#fff;border:1px solid #ababab"></div>
<svg class="a" style="left:1351.5px;top:709px;" width="8" height="4" viewBox="0 0 8 4"><path d="M0 0 H8 L4 4 Z" fill="#666"/></svg>
<div class="a" style="left:0px;top:717px;width:1366px;height:28px;background:#e6e6e6;"></div>
<div class="a" style="left:0px;top:717px;width:1345px;height:1px;background:#ababab;"></div>
<div class="a" style="left:0px;top:744px;width:1366px;height:1px;background:#d4d4d4;"></div>
<svg class="a" style="left:26px;top:726.5px;" width="5" height="8" viewBox="0 0 5 8"><path d="M4.5 0 V8 L0 4 Z" fill="#c0c0c0"/></svg>
<svg class="a" style="left:55.5px;top:726.5px;" width="5" height="8" viewBox="0 0 5 8"><path d="M0 0 V8 L4.5 4 Z" fill="#217346"/></svg>
<div class="a" style="left:100px;top:722px;width:1px;height:19px;background:#9b9b9b;"></div>
<div class="a" style="left:157px;top:722px;width:1px;height:19px;background:#9b9b9b;"></div>
<div class="a" style="left:210px;top:722px;width:1px;height:19px;background:#9b9b9b;"></div>
<div class="a" style="left:260px;top:722px;width:1px;height:19px;background:#9b9b9b;"></div>
<div class="a" style="left:314px;top:722px;width:1px;height:19px;background:#9b9b9b;"></div>
<div class="a" style="left:373px;top:722px;width:1px;height:19px;background:#9b9b9b;"></div>
<div class="a" style="left:433px;top:722px;width:1px;height:19px;background:#9b9b9b;"></div>
<div class="a" style="left:604px;top:722px;width:1px;height:19px;background:#9b9b9b;"></div>
<div class="a" style="left:666px;top:722px;width:1px;height:19px;background:#9b9b9b;"></div>
<div class="a" style="left:728px;top:722px;width:1px;height:19px;background:#9b9b9b;"></div>
<div class="a" style="left:770px;top:722px;width:1px;height:19px;background:#9b9b9b;"></div>
<div class="a" style="left:822px;top:722px;width:1px;height:19px;background:#9b9b9b;"></div>
<div class="t" style="left:112.8px;top:725.34px;font-size:12px;color:#444;font-weight:normal;">In_po</div>
<div class="t" style="left:170px;top:725.34px;font-size:12px;color:#444;font-weight:normal;">In_ta</div>
<div class="t" style="left:224px;top:725.34px;font-size:12px;color:#444;font-weight:normal;">In_if</div>
<div class="t" style="left:272px;top:725.34px;font-size:12px;color:#444;font-weight:normal;">Gi_ar</div>
<div class="t" style="left:326px;top:725.34px;font-size:12px;color:#444;font-weight:normal;">Re_ge</div>
<div class="t" style="left:385.3px;top:725.34px;font-size:12px;color:#444;font-weight:normal;">Re_qu</div>
<div class="t" style="left:446.2px;top:725.34px;font-size:12px;color:#444;font-weight:normal;">Aa_ti</div>
<div class="t" style="left:561.4px;top:725.34px;font-size:12px;color:#444;font-weight:normal;">Aa_al</div>
<div class="t" style="left:617.2px;top:725.34px;font-size:12px;color:#444;font-weight:normal;">Dash1</div>
<div class="t" style="left:679px;top:725.34px;font-size:12px;color:#444;font-weight:normal;">Dash2</div>
<div class="t" style="left:741.2px;top:725.34px;font-size:12px;color:#444;font-weight:normal;">INI</div>
<div class="t" style="left:782.7px;top:725.34px;font-size:12px;color:#444;font-weight:normal;">DUV</div>
<div class="t" style="left:833.8px;top:725.34px;font-size:12px;color:#444;font-weight:normal;">S</div>
<div class="a" style="left:487px;top:717px;width:62px;height:25px;background:#e6e6e6;border-left:1px solid #ababab;border-right:1px solid #ababab"></div>
<div class="a" style="left:488px;top:740px;width:60px;height:2px;background:#217346;"></div>
<div class="t" style="left:499.9px;top:724.92px;font-size:12.5px;color:#217346;font-weight:bold;letter-spacing:-0.4px">Aa_qu</div>
<svg class="a" style="left:848.5px;top:733px;" width="11" height="3" viewBox="0 0 11 3"><rect x="0" y="0" width="2.2" height="2.2" fill="#217346"/><rect x="4" y="0" width="2.2" height="2.2" fill="#217346"/><rect x="8" y="0" width="2.2" height="2.2" fill="#217346"/></svg>
<svg class="a" style="left:873px;top:723px;" width="17" height="17" viewBox="0 0 17 17"><circle cx="8" cy="7.8" r="7.3" fill="none" stroke="#777" stroke-width="1.2"/><path d="M8 3.8 V11.8 M4 7.8 H12" stroke="#777" stroke-width="1.3"/></svg>
<svg class="a" style="left:909px;top:726px;" width="3" height="11" viewBox="0 0 3 11"><circle cx="1.2" cy="1" r="0.9" fill="#aaa"/><circle cx="1.2" cy="5" r="0.9" fill="#aaa"/><circle cx="1.2" cy="9" r="0.9" fill="#aaa"/></svg>
<div class="a" style="left:941px;top:724px;width:391px;height:15px;background:#dadada;"></div>
<div class="a" style="left:926px;top:724px;width:16px;height:15px;background:#fff;border:1px solid #ababab"></div>
<svg class="a" style="left:931px;top:727.5px;" width="5" height="8" viewBox="0 0 5 8"><path d="M4.5 0 V8 L0 4 Z" fill="#555"/></svg>
<div class="a" style="left:941px;top:724px;width:316px;height:15px;background:#fff;border:1px solid #ababab"></div>
<div class="a" style="left:1331px;top:724px;width:16px;height:15px;background:#fff;border:1px solid #ababab"></div>
<svg class="a" style="left:1337px;top:727.5px;" width="5" height="8" viewBox="0 0 5 8"><path d="M0 0 V8 L4.5 4 Z" fill="#555"/></svg>
<div class="a" style="left:0px;top:745px;width:1366px;height:20px;background:#f3f2f1;"></div>
<div class="t" style="left:8.4px;top:749.69px;font-size:11px;color:#444;font-weight:normal;">Edita</div>
<svg class="a" style="left:62px;top:749px;" width="14" height="13" viewBox="0 0 14 13"><circle cx="3" cy="3" r="2.6" fill="#555"/><rect x="5.5" y="1" width="8" height="2" fill="#555"/><rect x="1" y="5" width="12.5" height="7.5" fill="none" stroke="#555" stroke-width="1"/><path d="M1 7.5 H13.5 M1 10 H13.5 M4.5 5 V12.5 M7.5 5 V12.5 M10.5 5 V12.5" stroke="#555" stroke-width="0.8"/></svg>
<div class="a" style="left:1086px;top:745px;width:38px;height:20px;background:#c8c6c4;"></div>
<svg class="a" style="left:1098px;top:749px;" width="13" height="13" viewBox="0 0 13 13"><rect x="0.0" y="0.0" width="3.6" height="3.4" fill="#6a6a6a"/><rect x="4.6" y="0.0" width="3.6" height="3.4" fill="#6a6a6a"/><rect x="9.2" y="0.0" width="3.6" height="3.4" fill="#6a6a6a"/><rect x="0.0" y="4.4" width="3.6" height="3.4" fill="#6a6a6a"/><rect x="4.6" y="4.4" width="3.6" height="3.4" fill="#6a6a6a"/><rect x="9.2" y="4.4" width="3.6" height="3.4" fill="#6a6a6a"/><rect x="0.0" y="8.8" width="3.6" height="3.4" fill="#6a6a6a"/><rect x="4.6" y="8.8" width="3.6" height="3.4" fill="#6a6a6a"/><rect x="9.2" y="8.8" width="3.6" height="3.4" fill="#6a6a6a"/></svg>
<svg class="a" style="left:1136px;top:749.5px;" width="14" height="13" viewBox="0 0 14 13"><rect x="0.5" y="0.5" width="13" height="12" fill="none" stroke="#666"/><rect x="3.5" y="2.5" width="7" height="8" fill="none" stroke="#666"/><path d="M5 4.5 H9 M5 6.5 H9 M5 8.5 H9" stroke="#666" stroke-width="0.9"/></svg>
<svg class="a" style="left:1174px;top:749.5px;" width="14" height="13" viewBox="0 0 14 13"><rect x="0.5" y="0.5" width="13" height="12" fill="none" stroke="#666"/><path d="M0.5 5.5 H8.5 V0.5 M3.5 0.5 V5.5" fill="none" stroke="#666"/></svg>
<div class="a" style="left:1205px;top:755.5px;width:6.5px;height:1.5px;background:#444;"></div>
<div class="a" style="left:1216px;top:756px;width:99px;height:1px;background:#a0a0a0;"></div>
<div class="a" style="left:1265px;top:753px;width:1px;height:7px;background:#a0a0a0;"></div>
<div class="a" style="left:1258.5px;top:750px;width:4px;height:11px;background:#666;"></div>
<div class="a" style="left:1319px;top:755.5px;width:7px;height:1.5px;background:#444;"></div>
<div class="a" style="left:1321.8px;top:752.7px;width:1.5px;height:7px;background:#444;"></div>
<div class="t" style="left:1337.5px;top:750.19px;font-size:11px;color:#444;font-weight:normal;">90%</div>
<div class="a" style="left:0px;top:765px;width:1366px;height:1px;background:#fafafa;"></div>
<div class="a" style="left:0px;top:766px;width:48px;height:2px;background:#2b2b2b;"></div>
<div class="a" style="left:48px;top:766px;width:344px;height:1px;background:#c8c8c8;"></div>
<div class="a" style="left:48px;top:767px;width:344px;height:1px;background:#f3f3f3;"></div>
<div class="a" style="left:392px;top:766px;width:297px;height:2px;background:#2b2b2b;"></div>
<div class="a" style="left:689px;top:766px;width:48px;height:2px;background:#585858;"></div>
<div class="a" style="left:737px;top:766px;width:629px;height:2px;background:#2b2b2b;"></div>
</body></html>
